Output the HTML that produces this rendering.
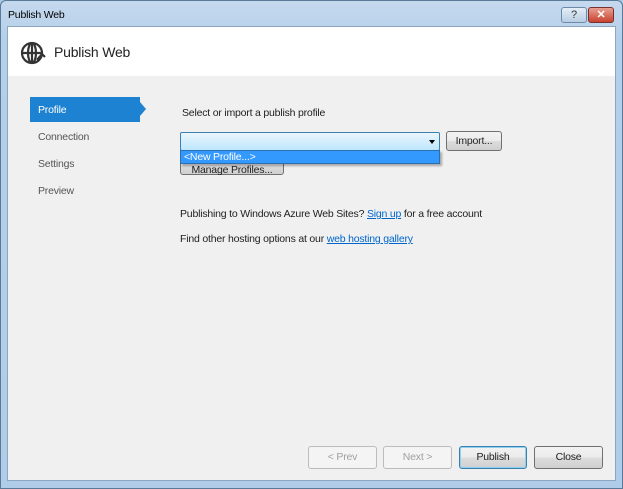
<!DOCTYPE html>
<html><head><style>
*{margin:0;padding:0;box-sizing:border-box}
body{width:623px;height:489px;background:#a9c9e6;font-family:"Liberation Sans",sans-serif;font-size:10.5px;letter-spacing:-0.2px;color:#1e1e1e;position:relative;overflow:hidden}
.frame{position:absolute;left:0;top:0;width:623px;height:489px;background:linear-gradient(#c5d9ee,#b4cfe9 40px,#afcde8);border:1px solid #5a7a99;border-radius:6px 6px 0 0}
.title{position:absolute;left:8px;top:9px;font-size:10.5px;color:#000}
.client{position:absolute;left:7px;top:26px;width:609px;height:455px;background:#f0f0f0;border:1px solid #8ca6c0}
.head{position:absolute;left:0;top:0;width:607px;height:49px;background:#fff}
.abs{position:absolute}
.nav{position:absolute;left:30px;color:#555}
.btn{position:absolute;height:23px;border:1px solid #707070;border-radius:3px;background:linear-gradient(#f2f2f2,#ebebeb 50%,#dddddd 50%,#cfcfcf);text-align:center;line-height:21px}
.dis{border-color:#bcbcbc;background:#f4f4f4;color:#a0a0a0}
a{color:#0066cc;text-decoration:underline}
</style></head><body>
<div class="frame"></div>
<div class="title">Publish Web</div>
<div class="abs" style="left:561px;top:7px;width:26px;height:16px;border:1px solid #6d8aa8;border-radius:3px;background:linear-gradient(#e4eef8,#b8cde2);text-align:center;font-size:11px;line-height:14px;color:#333">?</div>
<div class="abs" style="left:588px;top:7px;width:26px;height:16px;border:1px solid #7a3030;border-radius:3px;background:linear-gradient(#e8a090,#c8422e);text-align:center;font-size:11px;line-height:14px;color:#fff;font-weight:bold">✕</div>
<div class="client">
 <div class="head">
  <svg class="abs" style="left:12px;top:13px" width="26" height="26" viewBox="0 0 26 26" fill="none" stroke="#333" stroke-width="2.2">
   <circle cx="12" cy="13" r="10"/><ellipse cx="12" cy="13" rx="4" ry="10"/><line x1="2" y1="13" x2="22" y2="13"/><line x1="12" y1="3" x2="12" y2="23"/>
   <path d="M17 20 L22 14 L25 17" stroke="#333" fill="none"/>
  </svg>
  <div class="abs" style="left:46px;top:17px;font-size:14px;color:#222">Publish Web</div>
 </div>
</div>
<div class="abs" style="left:30px;top:97px;width:110px;height:25px;background:#1e82d2"></div>
<div class="abs" style="left:140px;top:102px;width:0;height:0;border-top:7px solid transparent;border-bottom:7px solid transparent;border-left:6px solid #1e82d2"></div>
<div class="nav" style="left:38px;top:104px;color:#fff">Profile</div>
<div class="nav" style="left:38px;top:131px">Connection</div>
<div class="nav" style="left:38px;top:158px">Settings</div>
<div class="nav" style="left:38px;top:185px">Preview</div>
<div class="abs" style="left:182px;top:107px">Select or import a publish profile</div>
<div class="btn" style="left:180px;top:155px;width:104px;height:20px;line-height:28px">Manage Profiles...</div>
<div class="abs" style="left:180px;top:132px;width:260px;height:19px;border:1px solid #3c7fb1;border-radius:2px;background:linear-gradient(#eaf6fd,#bee6fd)"></div>
<div class="abs" style="left:429px;top:140px;border-left:3px solid transparent;border-right:3px solid transparent;border-top:4px solid #000;width:0"></div>
<div class="abs" style="left:180px;top:150px;width:260px;height:14px;background:#3399ff;border:1px solid #2a6faf;color:#fff;padding-left:3px;line-height:12px;box-shadow:2px 2px 2px rgba(0,0,0,.3)">&lt;New Profile...&gt;</div>
<div class="btn" style="left:446px;top:131px;width:56px;height:20px;line-height:18px">Import...</div>
<div class="abs" style="left:180px;top:208px">Publishing to Windows Azure Web Sites? <a>Sign up</a> for a free account</div>
<div class="abs" style="left:180px;top:233px">Find other hosting options at our <a>web hosting gallery</a></div>
<div class="btn dis" style="left:308px;top:446px;width:69px">&lt; Prev</div>
<div class="btn dis" style="left:383px;top:446px;width:69px">Next &gt;</div>
<div class="btn" style="left:459px;top:446px;width:68px;border-color:#3c7fb1;box-shadow:inset 0 0 0 1px #8fd0f0">Publish</div>
<div class="btn" style="left:534px;top:446px;width:69px">Close</div>
</body></html>
